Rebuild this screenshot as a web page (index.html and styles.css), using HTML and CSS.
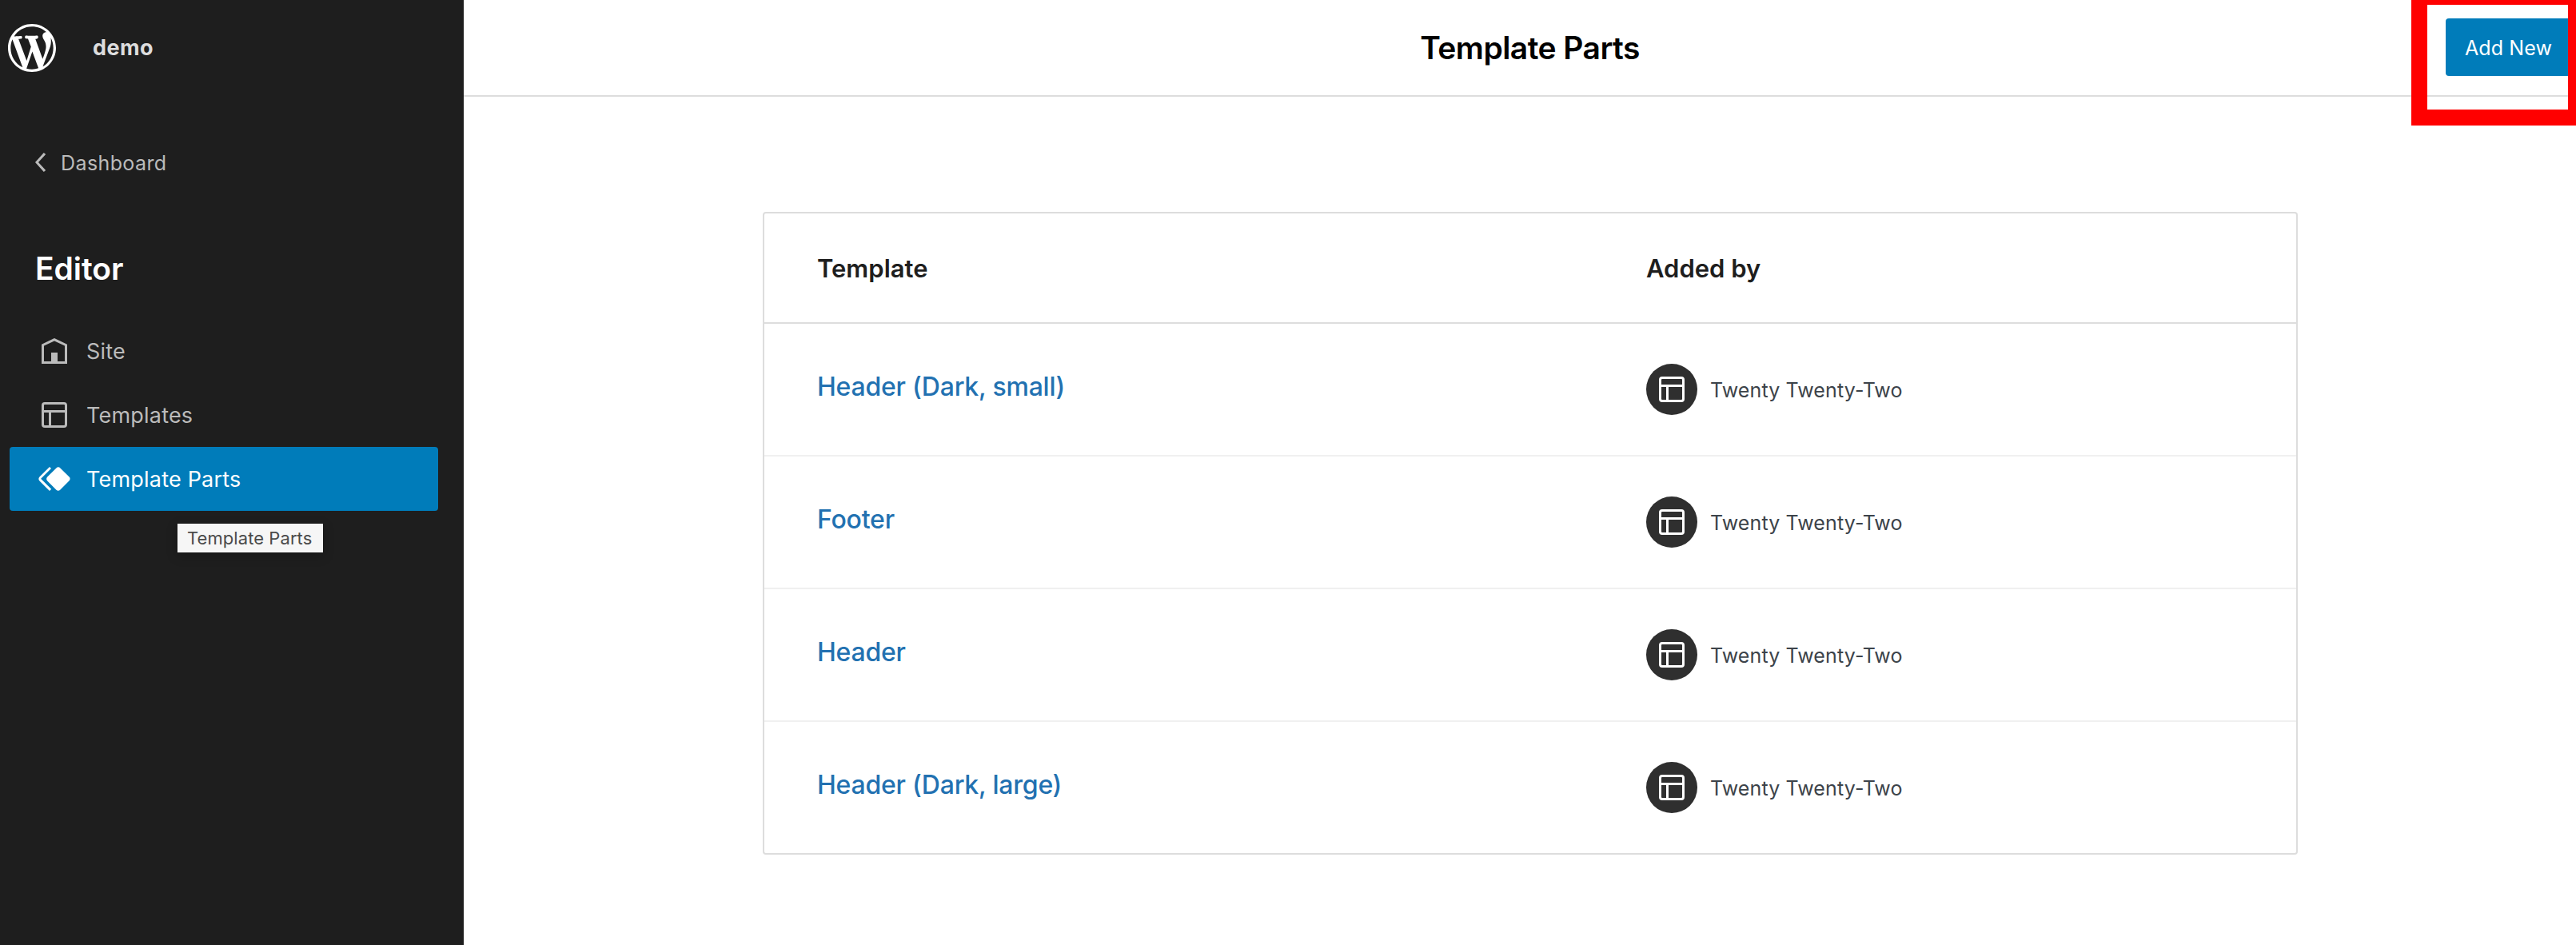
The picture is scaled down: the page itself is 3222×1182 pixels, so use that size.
FILE: index.html
```html
<!DOCTYPE html>
<html lang="en">
<head>
<meta charset="utf-8">
<title>Template Parts</title>
<link rel="stylesheet" href="styles.css">
</head>
<body>
<svg class="defs" width="0" height="0">
  <symbol id="layout" viewBox="0 0 24 24"><path d="M18 5.5H6a.5.5 0 00-.5.5v3h13V6a.5.5 0 00-.5-.5zm.5 5H10v8h8a.5.5 0 00.5-.5v-7.5zm-10 0h-3V18a.5.5 0 00.5.5h2.5v-8zM6 4h12a2 2 0 012 2v12a2 2 0 01-2 2H6a2 2 0 01-2-2V6a2 2 0 012-2z"/></symbol>
</svg>
<div class="app">
  <aside class="sidebar">
    <div class="brand">
      <svg class="logo" viewBox="-2 -2 24 24"><path d="M20 10c0-5.51-4.49-10-10-10C4.48 0 0 4.49 0 10c0 5.52 4.48 10 10 10 5.51 0 10-4.48 10-10zM7.78 15.37L4.37 6.22c.55-.02 1.17-.08 1.17-.08.5-.06.44-1.13-.06-1.11 0 0-1.45.11-2.37.11-.18 0-.37 0-.58-.01C4.12 2.69 6.87 1.11 10 1.11c2.33 0 4.45.87 6.05 2.34-.68-.11-1.65.39-1.65 1.58 0 .74.45 1.36.9 2.1.35.61.55 1.36.55 2.46 0 1.49-1.4 5-1.4 5l-3.03-8.37c.54-.02.82-.17.82-.17.5-.05.44-1.25-.06-1.22 0 0-1.44.12-2.38.12-.87 0-2.33-.12-2.33-.12-.5-.03-.56 1.2-.06 1.22l.92.08 1.26 3.41zM17.41 10c.24-.64.74-1.87.43-4.25.7 1.29 1.05 2.71 1.05 4.25 0 3.29-1.73 6.24-4.4 7.78.97-2.59 1.94-5.2 2.92-7.78zM6.1 18.09C3.12 16.65 1.11 13.53 1.11 10c0-1.3.23-2.48.72-3.59C3.25 10.3 4.67 14.2 6.1 18.09zm4.03-6.63l2.58 6.98c-.86.29-1.76.45-2.71.45-.79 0-1.57-.11-2.29-.33.81-2.38 1.62-4.74 2.42-7.1z"/></svg>
      <span class="site-name">demo</span>
    </div>
    <a class="back">
      <svg class="icon" viewBox="0 0 24 24"><path d="M14.6 7l-1.2-1L8 12l5.4 6 1.2-1-4.6-5z"/></svg>
      <span class="back-label">Dashboard</span>
    </a>
    <h2 class="section-title">Editor</h2>
    <nav class="menu">
      <a class="item">
        <svg class="icon" viewBox="0 0 24 24"><path d="M12 4L4 7.9V20h16V7.9L12 4zm6.5 14.5H14V13h-4v5.5H5.5V8.8L12 5.7l6.5 3.1v9.7z"/></svg>
        <span>Site</span>
      </a>
      <a class="item">
        <svg class="icon" viewBox="0 0 24 24"><use href="#layout"/></svg>
        <span>Templates</span>
      </a>
      <a class="item current">
        <svg class="icon" viewBox="0 0 24 24"><path d="M21.3 10.8l-5.6-5.6c-.7-.7-1.8-.7-2.5 0l-5.6 5.6c-.7.7-.7 1.8 0 2.5l5.6 5.6c.3.3.8.5 1.2.5s.9-.2 1.2-.5l5.6-5.6c.8-.7.8-1.9.1-2.5zm-17.6 1L10 5.5l-1-1-6.3 6.3c-.7.7-.7 1.8 0 2.5L9 19.5l1.1-1.1-6.3-6.3c-.2 0-.2-.2-.1-.3z"/></svg>
        <span>Template Parts</span>
        <span class="tooltip">Template Parts</span>
      </a>
    </nav>
  </aside>
  <main class="main">
    <header class="header">
      <h1 class="title">Template Parts</h1>
      <button class="add">Add New</button>
      <div class="highlight"></div>
    </header>
    <section class="table">
      <div class="row head"><div>Template</div><div>Added by</div></div>
      <div class="row">
        <a class="name">Header (Dark, small)</a>
        <div class="author"><span class="avatar"><svg class="icon"><use href="#layout"/></svg></span><span class="by">Twenty Twenty-Two</span></div>
      </div>
      <div class="row">
        <a class="name">Footer</a>
        <div class="author"><span class="avatar"><svg class="icon"><use href="#layout"/></svg></span><span class="by">Twenty Twenty-Two</span></div>
      </div>
      <div class="row">
        <a class="name">Header</a>
        <div class="author"><span class="avatar"><svg class="icon"><use href="#layout"/></svg></span><span class="by">Twenty Twenty-Two</span></div>
      </div>
      <div class="row">
        <a class="name">Header (Dark, large)</a>
        <div class="author"><span class="avatar"><svg class="icon"><use href="#layout"/></svg></span><span class="by">Twenty Twenty-Two</span></div>
      </div>
    </section>
  </main>
</div>
</body>
</html>
```
FILE: styles.css
```css
* { box-sizing: border-box; }
body {
  margin: 0;
  font-family: Inter, "Liberation Sans", sans-serif;
  background: #fff;
  overflow: hidden;
}
h1, h2 { margin: 0; font-weight: 600; }
svg { display: block; fill: currentColor; }
.defs { position: absolute; }
.app { display: flex; width: 3222px; height: 1182px; overflow: hidden; }

.sidebar {
  flex: 0 0 580px;
  background: #1e1e1e;
  color: #bbb;
}
.brand {
  display: flex;
  align-items: center;
  gap: 40px;
  height: 120px;
  padding-left: 4px;
}
.logo { width: 72px; height: 72px; color: #fff; }
.site-name {
  padding-bottom: 2px;
  font-size: 27px;
  font-weight: 700;
  letter-spacing: .4px;
  color: #ddd;
}
.icon { flex: none; width: 48px; height: 48px; }
.back {
  display: flex;
  align-items: center;
  margin: 59px 0 0 28px;
  font-size: 25px;
  letter-spacing: .4px;
}
.back-label { padding-top: 1px; }
.section-title {
  margin: 85px 0 39px 44px;
  font-size: 39px;
  line-height: 48px;
  letter-spacing: -.06px;
  color: #fff;
}
.menu { padding: 0 32px 0 12px; }
.item {
  position: relative;
  display: flex;
  align-items: center;
  gap: 16px;
  height: 80px;
  padding-left: 32px;
  border-radius: 4px;
  font-size: 27px;
  letter-spacing: .2px;
}
.current { background: #007cba; color: #fff; }
.tooltip {
  position: absolute;
  left: 210px;
  top: 96px;
  width: 182px;
  height: 36px;
  padding-left: 12px;
  background: #f6f6f6;
  box-shadow: 0 4px 14px rgba(0, 0, 0, .25);
  color: #4a4a4a;
  font-size: 22px;
  line-height: 36px;
  letter-spacing: .07px;
  white-space: nowrap;
}

.main { flex: 1; }
.header {
  position: relative;
  display: grid;
  grid-template-columns: 1fr auto 1fr;
  align-items: center;
  height: 121px;
  border-bottom: 2px solid #ddd;
}
.title {
  grid-column: 2;
  margin-left: 25px;
  font-size: 39px;
  letter-spacing: -.55px;
  color: #000;
}
.add {
  grid-column: 3;
  justify-self: end;
  width: 163px;
  height: 72px;
  margin-bottom: 1px;
  padding: 2px 0 0 24px;
  border: 0;
  border-radius: 4px;
  background: #007cba;
  color: #fff;
  font: 400 25px Inter, sans-serif;
  letter-spacing: .1px;
  text-align: left;
}
.highlight {
  position: absolute;
  top: -14px;
  right: -10px;
  width: 216px;
  height: 171px;
  border: 20px solid #f00;
}

.table {
  width: 1920px;
  margin: 144px auto 0 374px;
  border: 2px solid #ddd;
  border-radius: 4px;
}
.row {
  display: grid;
  grid-template-columns: 1037px 1fr;
  align-items: center;
  height: 166px;
  padding-left: 66px;
  border-bottom: 2px solid #f0f0f0;
}
.row:last-child { height: 164px; border-bottom: 0; }
.head {
  height: 138px;
  border-bottom-color: #ddd;
  font-size: 31px;
  font-weight: 600;
  color: #1e1e1e;
}
.name {
  padding-bottom: 8px;
  font-size: 32px;
  font-weight: 500;
  letter-spacing: -.22px;
  color: #2271b1;
}
.author { display: flex; align-items: center; gap: 16px; color: #3c434a; }
.avatar {
  display: grid;
  place-items: center;
  width: 64px;
  height: 64px;
  border-radius: 50%;
  background: #2f2f2f;
  color: #fff;
}
.by { padding-top: 2px; font-size: 25px; letter-spacing: .12px; }
```
